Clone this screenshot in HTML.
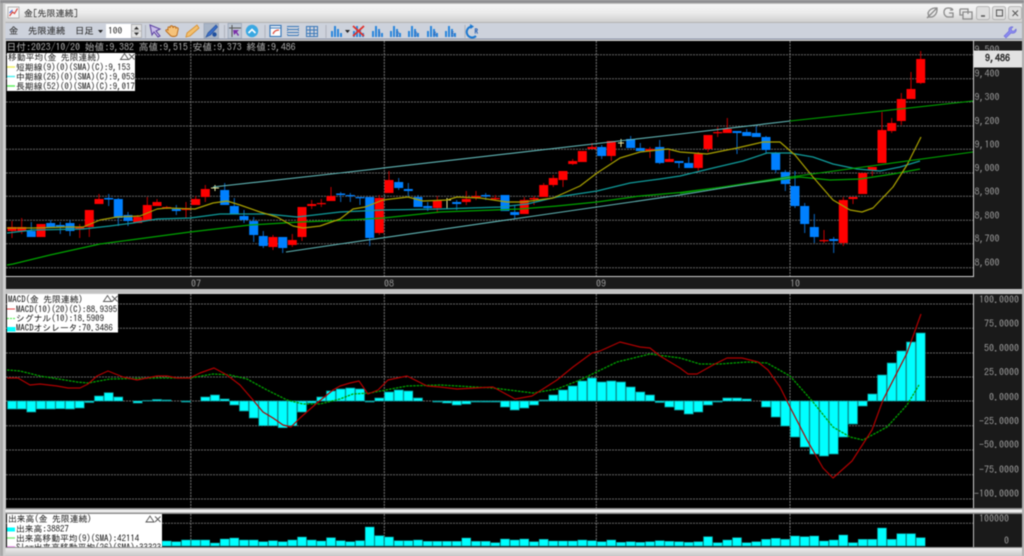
<!DOCTYPE html>
<html lang="ja"><head><meta charset="utf-8"><title>金[先限連続]</title>
<style>
html,body{margin:0;padding:0;background:#c4c4c4;width:1024px;height:556px;overflow:hidden}
svg{display:block;filter:blur(.5px)}
text{font-family:"IPAGothic","Liberation Mono","Noto Sans CJK JP",monospace}
.l{font-size:8.8px;fill:#111}
.a{font-size:10px;fill:#9a9a9a}
.tb{font-size:9.3px;fill:#222}
</style></head><body>
<svg xmlns="http://www.w3.org/2000/svg" width="1024" height="556" viewBox="0 0 1024 556">
<defs>
<linearGradient id="tg" x1="0" y1="0" x2="0" y2="1"><stop offset="0" stop-color="#f6f6f6"/><stop offset=".5" stop-color="#ebebeb"/><stop offset="1" stop-color="#cfcfcf"/></linearGradient>
<linearGradient id="bg" x1="0" y1="0" x2="0" y2="1"><stop offset="0" stop-color="#f2f2f2"/><stop offset="1" stop-color="#c8c8c8"/></linearGradient>
<clipPath id="vl"><rect x="7" y="514" width="155" height="33"/></clipPath>
<clipPath id="ml"><rect x="0" y="41" width="1024" height="235"/></clipPath>
<g id="bars"><path d="M0 12V6h2v6zM3 12V1h2v11zM6 12V4h2v8zM9 12V8h2v4z" fill="#2a86dc"/></g>
</defs>
<!-- window frame -->
<rect width="1024" height="556" fill="#c2c2c2"/>
<rect width="1024" height="3" fill="#8f8f92"/>
<rect x="3" y="4" width="1019" height="18" fill="url(#tg)"/>
<rect x="3" y="22" width="1019" height="1" fill="#b4b4b4"/>
<rect x="3" y="23" width="1019" height="15.5" fill="#cdd2dc"/>
<rect x="3" y="38.5" width="1019" height="1" fill="#8c94a8"/>
<!-- title -->
<g fill="none"><rect x="8" y="7" width="11" height="11" fill="#f5f5f5" stroke="#9a9a9a" stroke-width=".7"/><path d="M9.5 16l3-4 2 1.5 3-5" stroke="#d8443c" stroke-width="1.2"/><path d="M9.5 13l3-3" stroke="#3c60d8" stroke-width="1"/></g>
<text x="24" y="16.5" style="font-size:9px;fill:#1c1c1c">金[先限連続]</text>
<!-- window buttons -->
<g fill="none" stroke="#8a8a8a" stroke-width="1.3">
<path d="M927 18l10-10M928 13c1-3 4-5 7-5l2 0 0 2c0 3-2 6-5 7l-3 0z"/>
<path d="M953 10c-1-2-3-2-5-2-3 0-4 2-4 4.5s2 4.5 4 4.5h5v-4h-4M950 10h3"/>
<path d="M960 9h8v5M963 12h9v7h-9zM960 9v6h3"/></g>
<g fill="#dedede" stroke="#a8a8a8" stroke-width=".8"><rect x="976.5" y="6.5" width="13" height="13" rx="2"/><rect x="992.5" y="6.5" width="13" height="13" rx="2"/><rect x="1008.5" y="6.5" width="13" height="13" rx="2"/></g>
<g fill="none" stroke="#555" stroke-width="1"><path d="M981 16h4" stroke-width="1.5"/><rect x="996.5" y="10" width="6" height="6"/><path d="M1012.5 10.5l5.5 5.5M1018 10.5l-5.500 5.500"/></g>
<!-- toolbar -->
<text class="tb" x="9" y="34">金</text>
<text class="tb" x="28" y="34">先限連続</text>
<text class="tb" x="75" y="34">日足</text>
<path d="M98 30h5l-2.500 3z" fill="#222"/>
<rect x="106" y="24" width="25" height="14" fill="#fff"/>
<text x="108" y="34" style="font-size:9.5px;fill:#222">100</text>
<rect x="131.5" y="24.5" width="10" height="13" fill="#e4e4e4" stroke="#9a9a9a" stroke-width=".6"/>
<path d="M136.500 26.500l-2.500 3h5zM136.500 35.500l-2.500-3h5z" fill="#333"/><path d="M132 31h9" stroke="#999" stroke-width=".6"/>
<path d="M145.500 25v13" stroke="#aeb2bc"/>
<path d="M150 25l10 4-4 2 4 5-2 1-4-5-2 3z" fill="#c8bce8" stroke="#5a3fa0" stroke-width="1"/>
<path d="M168 28c0-2 2-1 2 0 0-3 3-3 3 0 0-2 3-2 3 0 1-1 3 0 2 2l-1 5c-1 2-6 2-7 0l-4-4c-1-1 1-2 2-1z" fill="#f5c27a" stroke="#b86818" stroke-width=".9"/>
<path d="M186 37l1-4 10-8 2 3-9 8z" fill="#f2c070" stroke="#d89030" stroke-width=".9"/>
<rect x="204" y="23.5" width="14.5" height="15" fill="#a9b5c6" stroke="#8f9cb0" stroke-width=".6"/>
<path d="M206 37l2-4 8-8 1.500 2-7 8z" fill="#3a6ec8" stroke="#24509c" stroke-width=".7"/><circle cx="214.5" cy="34.5" r="2.2" fill="#1e4f9e"/>
<path d="M224.500 25v13" stroke="#aeb2bc"/>
<rect x="228" y="23.5" width="13.5" height="15" fill="#bcc5d2" stroke="#8f9cb0" stroke-width=".6"/>
<path d="M232 25v12M229 28h12" stroke="#555" stroke-width="1"/><path d="M233 30h6l-2 2 2 3-1 1-2-3-2 2z" fill="#7a2fa8"/>
<circle cx="252" cy="31" r="6.2" fill="#3aa8e2"/><path d="M248.500 33l3.500-3.500 3.500 3.500" fill="none" stroke="#fff" stroke-width="1.6"/>
<path d="M265 25v13" stroke="#aeb2bc"/>
<rect x="270" y="25.5" width="11" height="11" fill="#fdfdfd" stroke="#3a78b8" stroke-width="1.2"/><path d="M270 28h11" stroke="#3a78b8"/><path d="M273 34c1-3 3-4 6-4" fill="none" stroke="#e05040" stroke-width="1.3"/>
<g fill="none" stroke="#3a78b8" stroke-width="1"><path d="M287.500 26.500h11M287.500 29.500h11M287.500 32.500h11M287.500 35.500h11"/><path d="M287.500 26v10M298.500 26v10" stroke-dasharray="1 1"/></g>
<g fill="none" stroke="#3a78b8" stroke-width="1"><path d="M306.500 26.500h11v10h-11zM306.500 30h11M306.500 33.500h11M310 26.500v10M314 26.500v10"/></g>
<path d="M326 25v13" stroke="#aeb2bc"/>
<use href="#bars" x="331" y="25"/><path d="M345 30h5l-2.500 3z" fill="#222"/>
<use href="#bars" x="353" y="25"/><path d="M353 26l11 10M364 26l-11 10" stroke="#e0302a" stroke-width="1.8"/>
<use href="#bars" x="372" y="25"/><text x="378" y="37" style="font-size:7px;fill:#2a5fb0">1</text>
<use href="#bars" x="390" y="25"/><text x="396" y="37" style="font-size:7px;fill:#2a5fb0">2</text>
<use href="#bars" x="408" y="25"/><text x="414" y="37" style="font-size:7px;fill:#2a5fb0">3</text>
<use href="#bars" x="427" y="25"/><text x="433" y="37" style="font-size:7px;fill:#2a5fb0">4</text>
<use href="#bars" x="445" y="25"/><text x="451" y="37" style="font-size:7px;fill:#2a5fb0">5</text>
<path d="M465 25v13" stroke="#aeb2bc"/>
<path d="M472 26.500a5.500 5.500 0 1 0 4 9.500" fill="none" stroke="#1b78d0" stroke-width="2"/><path d="M470 24l4 2.500-3.500 2.500z" fill="#1b78d0"/><text x="474.5" y="34" style="font-size:7px;fill:#1b58b0;font-weight:bold">R</text>
<path d="M1004 36l5-5c-1-3 2-5 4-4l-2 2 1 2 2 0 2-2c1 3-2 5-5 4l-5 5z" fill="#8a8af0" stroke="#6a6ad8" stroke-width=".6"/>

<!-- panels -->
<rect x="5" y="40.5" width="1018" height="249" fill="#d0d0d0"/>
<rect x="6" y="41" width="967" height="235" fill="#000"/>
<rect x="6" y="277" width="1016" height="12" fill="#1a1a1a"/>
<rect x="974" y="41" width="48" height="248" fill="#1a1a1a"/>
<rect x="5" y="293" width="1018" height="220" fill="#d0d0d0"/>
<rect x="6" y="294" width="967" height="214" fill="#000"/>
<rect x="974" y="294" width="48" height="214" fill="#1a1a1a"/>
<rect x="5" y="508" width="1018" height="1.5" fill="#8f8f8f"/>
<rect x="5" y="509.5" width="1018" height="3" fill="#ececec"/>
<rect x="5" y="512.5" width="1018" height="1.5" fill="#8f8f8f"/>
<rect x="6" y="514" width="967" height="33" fill="#000"/>
<rect x="974" y="514" width="48" height="33" fill="#1a1a1a"/>
<rect x="0" y="547" width="1024" height="9" fill="url(#bg)"/>
<rect x="0" y="547" width="1024" height="1" fill="#8f8f8f"/>
<rect x="0" y="3" width="3" height="553" fill="#a8a8a8"/><rect x="3" y="3" width="2.5" height="553" fill="#cfcfcf"/>
<rect x="1022" y="3" width="2" height="553" fill="#b0b0b0"/>

<!-- grids -->
<g fill="none" stroke="#666" stroke-width="1" stroke-dasharray="2 1">
<path d="M6 54.7H973M6 78.7H973M6 102H973M6 126H973M6 149.3H973M6 173H973M6 196.3H973M6 220.3H973M6 243.7H973M6 267.7H973"/>
<path d="M6 304H973M6 328.3H973M6 353H973M6 377H973M6 401H973M6 425.7H973M6 450H973M6 474.7H973M6 499H973"/>
<path d="M6 523.3H973"/>
</g>
<g fill="none" stroke="#7a7a7a" stroke-width="1" stroke-dasharray="2 1">
<path d="M190.8 41V276M384.3 41V276M596.3 41V276M790 41V276M190.8 294V508M384.3 294V508M596.3 294V508M790 294V508M190.8 514V547M384.3 514V547M596.3 514V547M790 514V547"/>
</g>

<!-- wicks -->
<path fill="none" stroke="#c00000" stroke-width="1" d="M12 221V238M21.7 218V234M41 224V237M79.7 224V238M89.3 210V237M99 194V204M137.7 215V223M147.3 197V221M157 199V206M166.7 206V209M186 202V218M195.7 196V205M205.3 185V202M273 235V250M292.3 234V247M302 207V241M311.7 200V209M321.3 199V207M331 187V201M379.3 195V235M389 171V193M437.3 196V213M466.3 191V205M476 191V200M495.3 195V200M524.3 197V214M534 196V205M543.7 183V197M553.3 175V187M563 171V187M572.7 159V165M582.3 151V162M592 143V149M611.3 141V161M650 147V158M669.3 150V162M698.3 152V171M708 135V152M717.7 127V137M727.3 118V133M824 230V243M843.3 197V246M853 197V204M862.7 173V194M872.3 167V176M882 112V163M891.7 118V133M901.3 93V125M911 72V99M920.7 51V84"/>
<path fill="none" stroke="#0a68c4" stroke-width="1" d="M31.3 222V237M50.7 220V228M60.3 222V234M70 220V236M108.7 194V206M118.3 198V226M128 212V226M176.3 205V215M224.7 183V205M234.3 198V214M244 210V223M253.7 217V242M263.3 231V248M282.7 237V253M340.7 192V202M350.3 193V202M360 197V205M369.7 197V246M398.7 178V190M408.3 183V196M418 195V207M427.7 202V211M456.7 200V210M485.7 193V200M505 195V211M514.7 205V219M601.7 145V159M630.7 136V148M640.3 143V151M659.7 140V164M679 161V168M688.7 157V168M737 131V154M746.7 129V136M756.3 126V137M766 136V154M775.7 152V173M785.3 170V191M795 171V208M804.7 203V233M814.3 214V243M833.7 237V253"/>
<path fill="none" stroke="#e8e8a0" stroke-width="1" d="M215 185V191M211 188H219M447 198V209M443 200H451M621 139V147M618 143H624"/>
<!-- bodies -->
<path fill="#ff0000" d="M7.5 227h9v4h-9zM17.2 227h9v4h-9zM36.5 224h9v13h-9zM75.2 227h9v2h-9zM84.8 210h9v17h-9zM94.5 199h9v5h-9zM133.2 217h9v6h-9zM142.8 205h9v16h-9zM152.5 202h9v4h-9zM162.2 207h9v1.5h-9zM181.5 208h9v2h-9zM191.2 199h9v6h-9zM200.8 189h9v8h-9zM268.5 237h9v10h-9zM287.8 240h9v5h-9zM297.5 207h9v30h-9zM307.2 204h9v2h-9zM316.8 203h9v1.3h-9zM326.5 196h9v5h-9zM374.8 198h9v35h-9zM384.5 180h9v13h-9zM432.8 200h9v8h-9zM461.8 199h9v3h-9zM471.5 196h9v2h-9zM490.8 198h9v1.3h-9zM519.8 200h9v14h-9zM529.5 198h9v1.5h-9zM539.2 185h9v12h-9zM548.8 178h9v7h-9zM558.5 171h9v9h-9zM568.2 161h9v3h-9zM577.8 151h9v11h-9zM587.5 147h9v2h-9zM606.8 141h9v15h-9zM645.5 149h9v2h-9zM664.8 159h9v3h-9zM693.8 154h9v14h-9zM703.5 135h9v14h-9zM713.2 132h9v1.3h-9zM722.8 129h9v4h-9zM819.5 240h9v1.3h-9zM838.8 200h9v43h-9zM848.5 197h9v2h-9zM858.2 173h9v21h-9zM867.8 167h9v3h-9zM877.5 130h9v33h-9zM887.2 123h9v8h-9zM896.8 99h9v22h-9zM906.5 89h9v10h-9zM916.2 59h9v24h-9z"/>
<path fill="#0080ff" d="M26.8 231h9v6h-9zM46.2 223h9v4h-9zM55.8 225h9v2h-9zM65.5 223h9v8h-9zM104.2 198h9v1.5h-9zM113.8 199h9v19h-9zM123.5 215h9v6h-9zM171.8 209h9v2h-9zM220.2 190h9v15h-9zM229.8 206h9v8h-9zM239.5 216h9v4h-9zM249.2 221h9v14h-9zM258.8 236h9v10h-9zM278.2 237h9v11h-9zM336.2 193.5h9v1.5h-9zM345.8 195h9v1.3h-9zM355.5 197h9v1.3h-9zM365.2 197h9v41h-9zM394.2 182h9v6h-9zM403.8 189h9v2h-9zM413.5 197h9v10h-9zM423.2 206h9v2h-9zM452.2 202h9v2h-9zM481.2 195h9v1.5h-9zM500.5 195h9v16h-9zM510.2 212h9v3h-9zM597.2 147h9v9h-9zM626.2 139h9v9h-9zM635.8 148h9v3h-9zM655.2 147h9v16h-9zM674.5 161h9v2h-9zM684.2 163h9v5h-9zM732.5 131h9v2h-9zM742.2 132h9v4h-9zM751.8 133h9v4h-9zM761.5 137h9v13h-9zM771.2 153h9v17h-9zM780.8 172h9v12h-9zM790.5 186h9v20h-9zM800.2 206h9v18h-9zM809.8 227h9v10h-9zM829.2 239h9v2h-9z"/>

<!-- main lines -->
<g fill="none" stroke-linejoin="round">
<path stroke="#00a400" stroke-width="1.2" d="M7 265L13 264 50 255 100 244 190 232 250 225 300 222 340 220.5 383 218 440 212 520 209 557 206 597 202 640 196 680 192.5 747 184 800 177 830 180 860 179 893 174 920 169"/>
<path stroke="#109c9c" stroke-width="1.2" d="M7 233L33 230 83 229 110 226 133 223 157 219 190 218 220 214 267 214 297 217 340 212 383 210 440 209 500 207 527 204 557 197 597 191 630 183 660 179 680 176 713 168 743 161 767 153 790 153 813 157 833 164 857 169 880 171 900 167 920 161"/>
<path stroke="#a8a000" stroke-width="1.2" d="M7 228L33 228 67 227 83 227 100 220 117 217 140 216 157 209 167 208 195 209 213 203 227 201 240 205 260 212 277 217 293 226 303 228 320 226 340 219 353 209 365 207 383 200 408 197 423 201 447 200 457 197 480 198 507 202 523 202 553 198 580 186 597 173 620 158 640 152 668 149 680 152 707 154 737 148 763 142 780 142 795 155 813 177 833 200 850 210 862 212 873 208 893 187 907 165 921 137"/>
<path stroke="#62b8b8" stroke-width="1.1" d="M213 187L340 173 680 134 790 121"/>
<path stroke="#00a800" stroke-width="1.1" d="M790 121L973 101"/>
<path stroke="#62b8b8" stroke-width="1.1" d="M286 252L340 244 680 195 790 177"/>
<path stroke="#00a800" stroke-width="1.1" d="M790 177L973 152"/>
<path stroke="#009c00" stroke-width="1.1" d="M680 193.5L790 176.5"/>
</g>

<!-- MACD bars -->
<path fill="#00ffff" stroke="#0a8f8f" stroke-width=".7" d="M7.5 401V409h9V401zM17.2 401V409h9V401zM26.8 401V412h9V401zM36.5 401V409h9V401zM46.2 401V409h9V401zM55.8 401V408.7h9V401zM65.5 401V409h9V401zM75.2 401V408h9V401zM84.8 401V402.5h9V401zM94.5 401V396h9V401zM104.2 401V392.7h9V401zM113.8 401V397h9V401zM133.2 401V403h9V401zM142.8 401V400.5h9V401zM152.5 401V399.5h9V401zM162.2 401V400h9V401zM181.5 401V402h9V401zM200.8 401V397h9V401zM210.5 401V395h9V401zM220.2 401V399h9V401zM229.8 401V405h9V401zM239.5 401V411h9V401zM249.2 401V418h9V401zM258.8 401V425.7h9V401zM268.5 401V425.7h9V401zM278.2 401V427.7h9V401zM287.8 401V425.7h9V401zM297.5 401V412h9V401zM307.2 401V403h9V401zM316.8 401V397h9V401zM326.5 401V391h9V401zM336.2 401V389h9V401zM345.8 401V388h9V401zM355.5 401V389h9V401zM365.2 401V402h9V401zM374.8 401V398h9V401zM384.5 401V392h9V401zM394.2 401V390h9V401zM403.8 401V391h9V401zM413.5 401V398h9V401zM432.8 401V402h9V401zM442.5 401V403h9V401zM452.2 401V405h9V401zM461.8 401V404h9V401zM471.5 401V402h9V401zM481.2 401V402h9V401zM490.8 401V402h9V401zM500.5 401V407h9V401zM510.2 401V410h9V401zM519.8 401V408h9V401zM529.5 401V405h9V401zM539.2 401V400h9V401zM548.8 401V395h9V401zM558.5 401V390h9V401zM568.2 401V386h9V401zM577.8 401V381h9V401zM587.5 401V378h9V401zM597.2 401V382h9V401zM606.8 401V381h9V401zM616.5 401V382h9V401zM626.2 401V387h9V401zM635.8 401V392h9V401zM645.5 401V395h9V401zM655.2 401V402.5h9V401zM664.8 401V407h9V401zM674.5 401V410h9V401zM684.2 401V414h9V401zM693.8 401V412h9V401zM703.5 401V405h9V401zM713.2 401V402h9V401zM722.8 401V398h9V401zM732.5 401V398h9V401zM742.2 401V399h9V401zM761.5 401V407h9V401zM771.2 401V417h9V401zM780.8 401V426h9V401zM790.5 401V437h9V401zM800.2 401V447h9V401zM809.8 401V454h9V401zM819.5 401V456h9V401zM829.2 401V454h9V401zM838.8 401V437h9V401zM848.5 401V424h9V401zM858.2 401V406h9V401zM867.8 401V394h9V401zM877.5 401V375h9V401zM887.2 401V363h9V401zM896.8 401V351h9V401zM906.5 401V342h9V401zM916.2 401V333h9V401z"/>
<!-- MACD lines -->
<g fill="none" stroke-linejoin="round">
<path stroke="#00a000" stroke-width="1.3" stroke-dasharray="2.5 1" d="M7 370L20 371 40 376 77 382 88 383 110 379 157 378 190 378 213 374 230 375 247 379 267 390 287 400 303 404 320 404 340 399 353 394 370 393 407 386 440 385 493 388 533 393 557 389 580 380 617 362 650 354 680 358 700 364 720 364 747 362 767 363 790 376 813 402 833 427 850 437 863 440 887 427 907 405 919 385"/>
<path stroke="#b00000" stroke-width="1.2" d="M7 378L18 378 30 385 40 384 57 386 68 388 80 388 88 384 97 376 108 371 123 377 137 380 157 376 167 376 177 378 190 378 200 373 214 368 227 375 240 385 253 400 263 412 273 418 283 425 291 427 300 418 317 403 333 390 340 386 350 383 359 381 368 394 378 390 388 380 407 376 427 386 440 387 457 389 493 387 515 399 532 396 557 380 573 367 592 353 600 351 620 342 640 347 650 348 660 356 680 368 688 374 697 374 713 365 727 358 742 358 758 362 768 370 780 387 790 407 807 440 823 468 833 478 852 461 872 430 883 400 907 353 921 314"/>
</g>

<!-- Volume bars -->
<path fill="#00ffff" stroke="#0a8f8f" stroke-width=".6" d="M162.2 546V541h9V546zM171.8 546V541.7h9V546zM181.5 546V540h9V546zM191.2 546V540h9V546zM200.8 546V540h9V546zM210.5 546V543h9V546zM220.2 546V539h9V546zM229.8 546V538h9V546zM239.5 546V540h9V546zM249.2 546V540h9V546zM258.8 546V541.7h9V546zM268.5 546V540.7h9V546zM278.2 546V541.7h9V546zM287.8 546V540h9V546zM297.5 546V537h9V546zM307.2 546V540h9V546zM316.8 546V541h9V546zM326.5 546V537.7h9V546zM336.2 546V540.7h9V546zM345.8 546V541.7h9V546zM355.5 546V540.7h9V546zM365.2 546V527h9V546zM374.8 546V535.7h9V546zM384.5 546V537h9V546zM394.2 546V540.7h9V546zM403.8 546V540.7h9V546zM413.5 546V540h9V546zM423.2 546V541.3h9V546zM432.8 546V541.3h9V546zM442.5 546V541.3h9V546zM452.2 546V541.3h9V546zM461.8 546V538h9V546zM471.5 546V541.3h9V546zM481.2 546V541.3h9V546zM490.8 546V542.7h9V546zM500.5 546V539h9V546zM510.2 546V540h9V546zM519.8 546V539h9V546zM529.5 546V541.7h9V546zM539.2 546V539.3h9V546zM548.8 546V541h9V546zM558.5 546V541h9V546zM568.2 546V541h9V546zM577.8 546V540h9V546zM587.5 546V540.7h9V546zM597.2 546V541.7h9V546zM606.8 546V540h9V546zM616.5 546V542.3h9V546zM626.2 546V541.7h9V546zM635.8 546V542.3h9V546zM645.5 546V541.7h9V546zM655.2 546V540.7h9V546zM664.8 546V541.3h9V546zM674.5 546V541.7h9V546zM684.2 546V542.3h9V546zM693.8 546V541.7h9V546zM703.5 546V536.7h9V546zM713.2 546V542.7h9V546zM722.8 546V540h9V546zM732.5 546V537.7h9V546zM742.2 546V542.7h9V546zM751.8 546V541.7h9V546zM761.5 546V539.3h9V546zM771.2 546V538.3h9V546zM780.8 546V539.3h9V546zM790.5 546V536h9V546zM800.2 546V536.7h9V546zM809.8 546V536h9V546zM819.5 546V541h9V546zM829.2 546V540h9V546zM838.8 546V535h9V546zM848.5 546V542.7h9V546zM858.2 546V539.3h9V546zM867.8 546V539.3h9V546zM877.5 546V528h9V546zM887.2 546V539.3h9V546zM896.8 546V533.7h9V546zM906.5 546V533.7h9V546zM916.2 546V537.7h9V546z"/>

<!-- axis labels main -->
<g clip-path="url(#ml)"><text class="a" x="974.5" y="53">9,500</text></g>
<rect x="974" y="50.5" width="48" height="17" fill="#e2e2e2"/>
<text x="985" y="61.5" style="font-size:10px;font-weight:bold;fill:#222">9,486</text>
<text class="a" x="974.5" y="77">9,400</text>
<text class="a" x="974.5" y="100.5">9,300</text>
<text class="a" x="974.5" y="124.5">9,200</text>
<text class="a" x="974.5" y="147.8">9,100</text>
<text class="a" x="974.5" y="171.5">9,000</text>
<text class="a" x="974.5" y="195">8,900</text>
<text class="a" x="974.5" y="219">8,800</text>
<text class="a" x="974.5" y="242">8,700</text>
<text class="a" x="974.5" y="266">8,600</text>
<text class="a" x="191" y="287">07</text>
<text class="a" x="384" y="287">08</text>
<text class="a" x="596" y="287">09</text>
<text class="a" x="790" y="287">10</text>
<g text-anchor="end">
<text class="a" x="1019" y="303">100.0000</text>
<text class="a" x="1019" y="327">75.0000</text>
<text class="a" x="1019" y="351.5">50.0000</text>
<text class="a" x="1019" y="375.5">25.0000</text>
<text class="a" x="1019" y="400.5">0.0000</text>
<text class="a" x="1019" y="424.5">-25.0000</text>
<text class="a" x="1019" y="448">-50.0000</text>
<text class="a" x="1019" y="473">-75.0000</text>
<text class="a" x="1019" y="497">-100.0000</text>
<text class="a" x="1009" y="522">100000</text>
<text class="a" x="1009" y="544">0</text>
</g>

<!-- OHLC header -->
<text x="6.5" y="50.5" style="font-size:9.8px;fill:#b0b0b0">日付:2023/10/20 始値:9,382 高値:9,515 安値:9,373 終値:9,486</text>

<!-- main legend -->
<rect x="7" y="53" width="128" height="38" fill="#fff"/>
<text class="l" x="8" y="60.5">移動平均(金 先限連続)</text>
<path d="M120.5 59.5l4-6 4 6zM129 54l5.5 5.5M134.5 54l-5.5 5.5" fill="none" stroke="#555" stroke-width=".9"/>
<path d="M7 67h8" stroke="#f0f060" stroke-width="1.5"/><path d="M7 76.5h8" stroke="#50f0f0" stroke-width="1.5"/><path d="M7 86h8" stroke="#60f060" stroke-width="1.5"/>
<text class="l" x="16" y="70.3">短期線(9)(0)(SMA)(C):9,153</text>
<text class="l" x="16" y="80">中期線(26)(0)(SMA)(C):9,053</text>
<text class="l" x="16" y="89.5">長期線(52)(0)(SMA)(C):9,017</text>

<!-- MACD legend -->
<rect x="7" y="294" width="111" height="38.5" fill="#fff"/>
<text class="l" x="8" y="302.5">MACD(金 先限連続)</text>
<path d="M103.5 301.5l4-6 4 6zM112 296l5.5 5.5M117.5 296l-5.5 5.5" fill="none" stroke="#555" stroke-width=".9"/>
<path d="M7 309h8" stroke="#f04040" stroke-width="1"/><path d="M7 318.5h8" stroke="#60f060" stroke-width="1.3" stroke-dasharray="2 1"/>
<rect x="7" y="327" width="8.5" height="4.5" fill="#00ffff"/>
<text class="l" x="16" y="312.5">MACD(10)(20)(C):88.9395</text>
<text class="l" x="16" y="321.5">シグナル(10):18.5909</text>
<text class="l" x="16" y="331">MACDオシレータ:70.3486</text>

<!-- volume legend -->
<rect x="7" y="514" width="155" height="33" fill="#fff"/>
<g clip-path="url(#vl)">
<text class="l" x="8" y="522">出来高(金 先限連続)</text>
<text class="l" x="16" y="532">出来高:38827</text>
<text class="l" x="16" y="541.5">出来高移動平均(9)(SMA):42114</text>
<text class="l" x="16" y="550.5">Slow出来高移動平均(26)(SMA):33323</text>
<path d="M146 522l4-6 4 6zM155 516.5l5.5 5.5M160.5 516.5l-5.5 5.5" fill="none" stroke="#555" stroke-width=".9"/>
<path d="M7 529.5h8" stroke="#00ffff" stroke-width="4"/><path d="M7 538h8" stroke="#80f080" stroke-width="1.5"/><path d="M7 547h8" stroke="#f080f0" stroke-width="1.5"/>
</g>
</svg>
</body></html>
